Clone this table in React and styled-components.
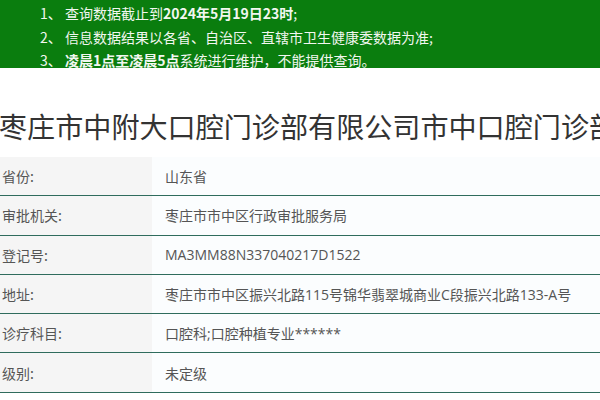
import React from "react";
import styled, { createGlobalStyle } from "styled-components";

const GlobalStyle = createGlobalStyle`
  html, body {
    margin: 0;
    padding: 0;
    background: #fff;
    overflow: hidden;
  }
  body {
    font-family: "Open Sans", "Noto Sans CJK SC", sans-serif;
  }
`;

const rows = [
  { label: "省份:", value: "山东省" },
  { label: "审批机关:", value: "枣庄市市中区行政审批服务局" },
  { label: "登记号:", value: "MA3MM88N337040217D1522" },
  { label: "地址:", value: "枣庄市市中区振兴北路115号锦华翡翠城商业C段振兴北路133-A号" },
  { label: "诊疗科目:", value: "口腔科;口腔种植专业******" },
  { label: "级别:", value: "未定级" },
];

export default function App() {
  return (
    <Page>
      <GlobalStyle />
      <Notice>
        <NoticeLine>
          1、 查询数据截止到<b>2024年5月19日23时</b>;
        </NoticeLine>
        <NoticeLine>2、 信息数据结果以各省、自治区、直辖市卫生健康委数据为准;</NoticeLine>
        <NoticeLine>
          3、 <b>凌晨1点至凌晨5点</b>系统进行维护，不能提供查询。
        </NoticeLine>
      </Notice>
      <Title>枣庄市中附大口腔门诊部有限公司市中口腔门诊部</Title>
      <Table>
        {rows.map((row) => (
          <Row key={row.label}>
            <Label>{row.label}</Label>
            <Value>{row.value}</Value>
          </Row>
        ))}
      </Table>
    </Page>
  );
}

const Page = styled.div`
  width: 600px;
  height: 400px;
  overflow: hidden;
`;

const Notice = styled.div`
  background: #0a7d0e;
  color: #f2f7f0;
  height: 68px;
  padding: 2px 0 0 40px;
  box-sizing: border-box;
  font-family: "Noto Sans CJK SC", sans-serif;
  font-size: 14px;
  line-height: 23.5px;

  b {
    font-weight: 700;
  }
`;

const NoticeLine = styled.div`
  white-space: nowrap;
`;

const Title = styled.h1`
  margin: 39px 0 12px -1px;
  font-family: "Noto Sans CJK SC", sans-serif;
  font-weight: 400;
  font-size: 28.1px;
  line-height: 38px;
  color: #333;
  white-space: nowrap;
`;

const Table = styled.div`
  display: flex;
  flex-direction: column;
`;

const Row = styled.div`
  display: grid;
  grid-template-columns: 152px 1fr;
  height: 39.3px;
  box-sizing: border-box;
  border-bottom: 1.5px solid #2f6c5d;
`;

const Label = styled.div`
  display: flex;
  align-items: center;
  padding-left: 2px;
  background: #f5f5f5;
  color: #555;
  font-family: "Noto Sans CJK SC", sans-serif;
  font-size: 14px;
`;

const Value = styled.div`
  display: flex;
  align-items: center;
  padding-left: 13px;
  background: #fbfdfe;
  color: #555;
  font-size: 14px;
  font-family: "Open Sans", "Noto Sans CJK SC", sans-serif;
  white-space: nowrap;
`;
